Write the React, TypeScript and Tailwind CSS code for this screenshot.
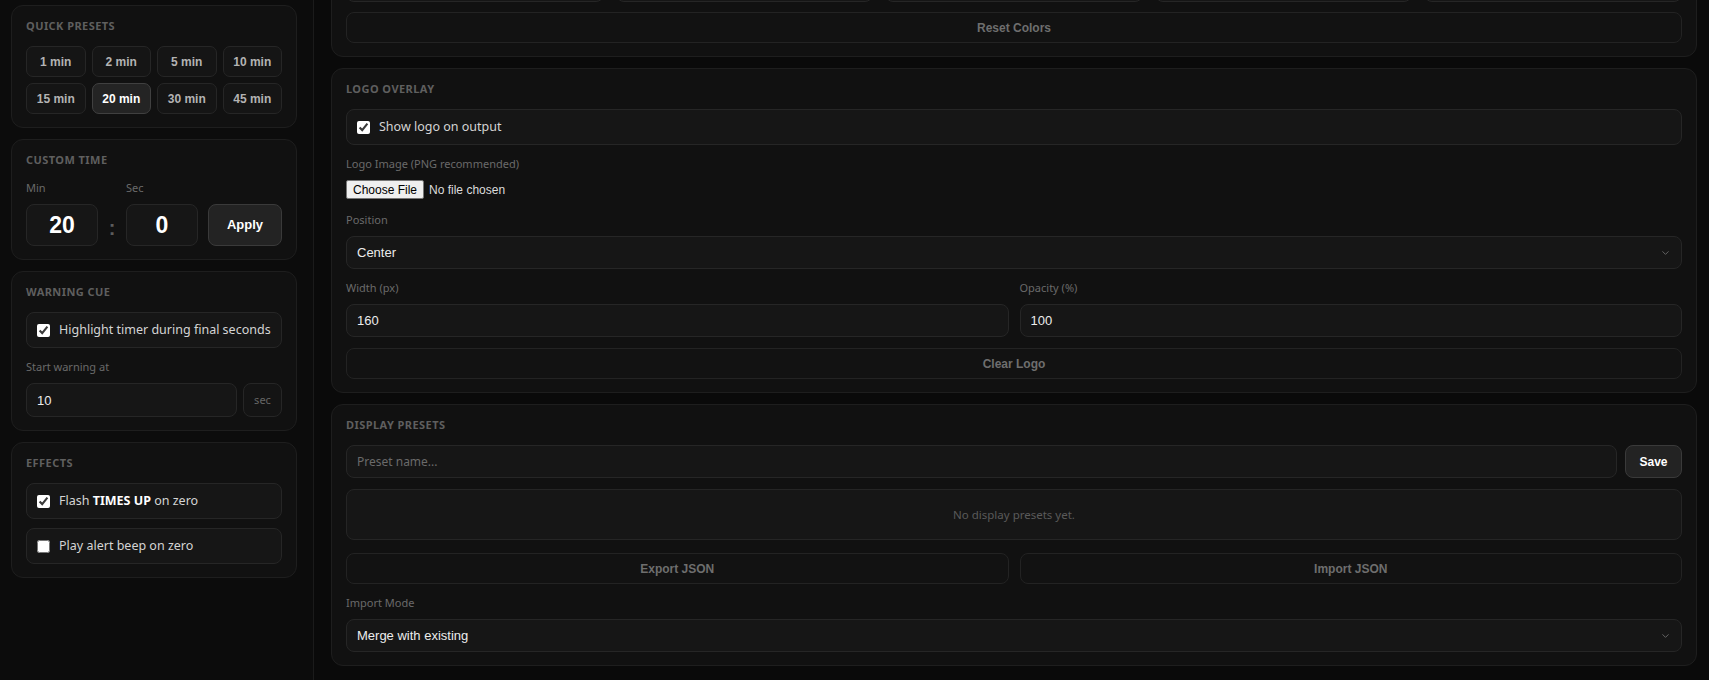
import React from "react";
import { ChevronDown } from "lucide-react";

const arial = "font-['Liberation_Sans',Arial,sans-serif]";

function Panel({
  title,
  children,
  className = "",
}: {
  title?: string;
  children: React.ReactNode;
  className?: string;
}) {
  return (
    <section
      className={`rounded-[12px] border border-[#1e1e1e] bg-[#111111] px-[14px] pb-[13px] pt-[12px] ${className}`}
    >
      {title && (
        <h2 className="mb-[13px] text-[11px] font-bold uppercase leading-[15px] tracking-[0.04em] text-[#5f5f5f]">
          {title}
        </h2>
      )}
      {children}
    </section>
  );
}

function Label({ children }: { children: React.ReactNode }) {
  return (
    <div className="mb-[8px] text-[11px] leading-[16px] text-[#6a6a6a]">
      {children}
    </div>
  );
}

function CheckRow({
  checked,
  children,
}: {
  checked?: boolean;
  children: React.ReactNode;
}) {
  return (
    <label className="flex h-[36px] items-center gap-[9px] rounded-[8px] border border-[#262626] bg-[#161616] px-[10px] text-[12.5px] text-[#d4d4d4]">
      <input
        type="checkbox"
        defaultChecked={checked}
        className="h-[13px] w-[13px] shrink-0 accent-white"
      />
      <span className="whitespace-nowrap">{children}</span>
    </label>
  );
}

function GhostButton({ children }: { children: React.ReactNode }) {
  return (
    <button
      className={`${arial} h-[31px] w-full rounded-[8px] border border-[#232323] bg-[#121212] text-[12px] font-bold text-[#6e6e6e]`}
    >
      {children}
    </button>
  );
}

function TextInput({ value, placeholder }: { value?: string; placeholder?: string }) {
  return (
    <input
      defaultValue={value}
      placeholder={placeholder}
      className={`${arial} h-[33px] w-full rounded-[8px] border border-[#262626] bg-[#161616] px-[10px] text-[13px] text-[#ececec] outline-none placeholder:font-['Noto_Sans',sans-serif] placeholder:text-[12px] placeholder:text-[#6a6a6a]`}
    />
  );
}

function Select({ value }: { value: string }) {
  return (
    <div className="relative">
      <select
        defaultValue={value}
        className={`${arial} h-[33px] w-full appearance-none rounded-[8px] border border-[#262626] bg-[#161616] px-[10px] text-[13px] text-[#ececec] outline-none`}
      >
        <option>{value}</option>
      </select>
      <ChevronDown
        size={11}
        strokeWidth={2}
        className="pointer-events-none absolute right-[11px] top-1/2 -translate-y-1/2 text-[#6a6a6a]"
      />
    </div>
  );
}

const presets = ["1 min", "2 min", "5 min", "10 min", "15 min", "20 min", "30 min", "45 min"];
const colors = ["#ffffff", "#000000", "#ff4d4d", "#ff0000", "#3b82f6"];

export default function App() {
  return (
    <div className="flex h-[680px] w-full overflow-hidden bg-[#0a0a0a] font-['Noto_Sans',sans-serif]">
      {/* Sidebar */}
      <aside className="flex w-[314px] shrink-0 flex-col gap-[11px] border-r border-[#1b1b1b] bg-[#0c0c0c] pl-[11px] pr-[16px] pt-[5px]">
        <Panel title="Quick Presets">
          <div className="grid grid-cols-4 gap-[6px]">
            {presets.map((p) => {
              const active = p === "20 min";
              return (
                <button
                  key={p}
                  className={`${arial} h-[31px] rounded-[7px] border text-[12px] font-bold ${
                    active
                      ? "border-[#404040] bg-[#242424] text-white"
                      : "border-[#262626] bg-[#151515] text-[#b3b3b3]"
                  }`}
                >
                  {p}
                </button>
              );
            })}
          </div>
        </Panel>

        <Panel title="Custom Time">
          <div className="flex items-end">
            <div className="flex-1">
              <Label>Min</Label>
              <input
                defaultValue="20"
                className={`${arial} h-[42px] w-full rounded-[8px] border border-[#262626] bg-[#161616] text-center text-[23px] font-bold text-white outline-none`}
              />
            </div>
            <div
              className={`${arial} flex h-[42px] w-[28px] items-center justify-center pt-[6px] text-[20px] font-bold text-[#5c5c5c]`}
            >
              :
            </div>
            <div className="flex-1">
              <Label>Sec</Label>
              <input
                defaultValue="0"
                className={`${arial} h-[42px] w-full rounded-[8px] border border-[#262626] bg-[#161616] text-center text-[23px] font-bold text-white outline-none`}
              />
            </div>
            <button
              className={`${arial} ml-[10px] h-[42px] flex-1 rounded-[8px] border border-[#3a3a3a] bg-[#232323] text-[13px] font-bold text-white`}
            >
              Apply
            </button>
          </div>
        </Panel>

        <Panel title="Warning Cue">
          <CheckRow checked>Highlight timer during final seconds</CheckRow>
          <div className="mt-[11px]">
            <Label>Start warning at</Label>
            <div className="flex gap-[6px]">
              <input
                defaultValue="10"
                className={`${arial} h-[34px] min-w-0 flex-1 rounded-[8px] border border-[#262626] bg-[#161616] px-[10px] text-[13px] text-[#ececec] outline-none`}
              />
              <div className="flex h-[34px] w-[39px] items-center justify-center rounded-[8px] border border-[#262626] bg-[#141414] text-[11px] text-[#666]">
                sec
              </div>
            </div>
          </div>
        </Panel>

        <Panel title="Effects">
          <div className="flex flex-col gap-[9px]">
            <CheckRow checked>
              Flash <b className="font-bold text-white">TIMES UP</b> on zero
            </CheckRow>
            <CheckRow>Play alert beep on zero</CheckRow>
          </div>
        </Panel>
      </aside>

      {/* Main */}
      <main className="flex min-w-0 flex-1 flex-col gap-[11px] pl-[17px] pr-[12px]">
        <Panel className="-mt-[91px]">
          <div className="grid h-[80px] grid-cols-5 gap-[12px]">
            {colors.map((hex) => (
              <div
                key={hex}
                className="flex items-end rounded-[8px] border border-[#262626] bg-[#161616] p-[10px]"
              >
                <div
                  className="h-[30px] w-full rounded-[6px] border border-[#333]"
                  style={{ backgroundColor: hex }}
                />
              </div>
            ))}
          </div>
          <div className="mt-[10px]">
            <GhostButton>Reset Colors</GhostButton>
          </div>
        </Panel>

        <Panel title="Logo Overlay">
          <CheckRow checked>Show logo on output</CheckRow>
          <div className="mt-[11px]">
            <Label>Logo Image (PNG recommended)</Label>
            <input
              type="file"
              className={`${arial} block h-[21px] text-[12px] text-[#dcdcdc] file:mr-[5px] file:h-[19px] file:rounded-[2px] file:border file:border-[#767676] file:bg-[#efefef] file:px-[6px] file:text-[12px] file:text-black`}
            />
          </div>
          <div className="mt-[11px]">
            <Label>Position</Label>
            <Select value="Center" />
          </div>
          <div className="mt-[11px] grid grid-cols-2 gap-[11px]">
            <div>
              <Label>Width (px)</Label>
              <TextInput value="160" />
            </div>
            <div>
              <Label>Opacity (%)</Label>
              <TextInput value="100" />
            </div>
          </div>
          <div className="mt-[11px]">
            <GhostButton>Clear Logo</GhostButton>
          </div>
        </Panel>

        <Panel title="Display Presets">
          <div className="flex gap-[8px]">
            <div className="flex-1">
              <TextInput placeholder="Preset name..." />
            </div>
            <button
              className={`${arial} h-[33px] w-[57px] rounded-[8px] border border-[#3a3a3a] bg-[#232323] text-[12px] font-bold text-white`}
            >
              Save
            </button>
          </div>
          <div className="mt-[11px] flex h-[51px] items-center justify-center rounded-[8px] border border-[#252525] bg-[#161616] text-[11.5px] text-[#5a5a5a]">
            No display presets yet.
          </div>
          <div className="mt-[13px] grid grid-cols-2 gap-[11px]">
            <GhostButton>Export JSON</GhostButton>
            <GhostButton>Import JSON</GhostButton>
          </div>
          <div className="mt-[11px]">
            <Label>Import Mode</Label>
            <Select value="Merge with existing" />
          </div>
        </Panel>
      </main>
    </div>
  );
}
